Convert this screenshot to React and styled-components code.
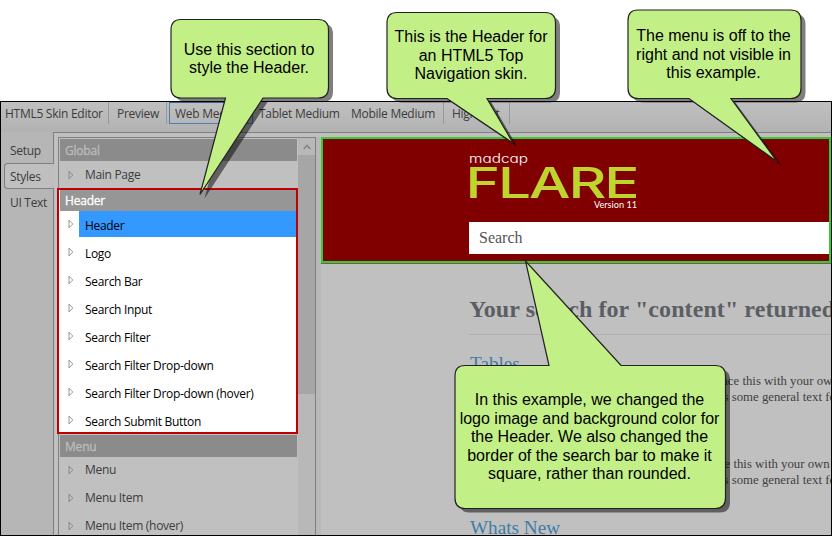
import React from "react";
import styled, { createGlobalStyle } from "styled-components";

const Global = createGlobalStyle`
  * { box-sizing: border-box; }
  html, body { margin: 0; padding: 0; background: #fff; }
  body { width: 832px; height: 536px; overflow: hidden; }
`;

const Stage = styled.div`
  position: relative;
  width: 832px;
  height: 536px;
  padding-top: 101px;
  overflow: hidden;
`;

const Window = styled.div`
  display: flex;
  flex-direction: column;
  height: 435px;
  border: 1px solid #000;
  background: #b6b6b6;
  font-family: "Open Sans", "Noto Sans", sans-serif;
  font-size: 12px;
  color: #3c3c3c;
  overflow: hidden;
`;

const Toolbar = styled.div`
  display: flex;
  flex: none;
  height: 30px;
  background: linear-gradient(#c0c0c0, #b2b2b2);
`;

const Tool = styled.div`
  width: ${(p) => p.$w}px;
  height: 22px;
  padding-left: ${(p) => p.$pad ?? 8}px;
  line-height: 24px;
  white-space: nowrap;
  letter-spacing: ${(p) => p.$ls ?? -0.27}px;
  border-right: ${(p) => (p.$sep ? "1px solid #969a9e" : "none")};
`;

const ActiveTool = styled(Tool)`
  margin-left: 2px;
  border: 1px solid #4a80b8;
  border-top-color: #3d6288;
  line-height: 22px;
`;

const Body = styled.div`
  display: flex;
  flex: 1;
  min-height: 0;
`;

const SideTabs = styled.div`
  width: 53px;
  flex: none;
  display: flex;
  flex-direction: column;
  background: #b6b6b6;
`;

const SideTab = styled.div`
  height: ${(p) => p.$h}px;
  padding: ${(p) => p.$top}px 0 0 9px;
  line-height: 16px;
  border-right: 1px solid #808080;
  letter-spacing: ${(p) => p.$ls ?? -0.3}px;
  white-space: nowrap;
`;

const ActiveSideTab = styled(SideTab)`
  margin-left: 3px;
  padding-left: 5px;
  border: 1px solid #808080;
  border-right: none;
  border-radius: 4px 0 0 4px;
  background: #bfbfbf;
`;

const Work = styled.div`
  flex: 1;
  min-width: 0;
  display: flex;
  padding: 4px 0 0 4px;
  border-top: 1px solid #808080;
  background: #c0c0c0;
`;

const StylePanel = styled.div`
  display: flex;
  width: 258px;
  flex: none;
  border: 1px solid #808080;
  border-bottom: none;
`;

const Tree = styled.div`
  width: 239px;
  flex: none;
  padding-top: 1px;
`;

const GroupTitle = styled.div`
  height: ${(p) => p.$h ?? 22}px;
  margin: 0 1px;
  padding-left: 5px;
  background: ${(p) => (p.$lit ? "#969696" : "#8b8b8b")};
  color: ${(p) => (p.$lit ? "#fff" : "#bcbcbc")};
  line-height: ${(p) => p.$lh ?? 23}px;
  -webkit-text-stroke: ${(p) => (p.$lit ? "0.3px #fff" : "0.3px #bcbcbc")};
  letter-spacing: ${(p) => p.$ls ?? -0.2}px;
`;

const Row = styled.div`
  display: flex;
  align-items: center;
  height: 28px;
  margin-top: ${(p) => p.$mt ?? 0}px;
  padding-left: 9px;
`;

const RowLabel = styled.div`
  flex: 1;
  height: 26px;
  margin-left: 5px;
  padding-left: 6px;
  line-height: 26px;
  white-space: nowrap;
  letter-spacing: -0.31px;
  background: ${(p) => (p.$on ? "#3399ff" : "transparent")};
`;

const Focused = styled.div`
  margin: -1px 0 1px -2px;
  width: 241px;
  height: 246px;
  overflow: hidden;
  border: 2px solid #c00000;
  background: #fff;
  color: #000;
  & > :first-child { margin-right: 0; }
  ${RowLabel} { line-height: 29px; }
`;

const Scrollbar = styled.div`
  flex: 1;
  display: flex;
  flex-direction: column;
  background: #b8b8b8;
`;
const ScrollUp = styled.div`
  height: 17px;
  display: flex;
  align-items: center;
  justify-content: center;
`;
const Thumb = styled.div`
  height: 239px;
  background: #a6a6a6;
`;

const Preview = styled.div`
  flex: 1;
  min-width: 0;
  border-left: 5px solid #b8b8b8;
  font-family: "Liberation Serif", serif;
  overflow: hidden;
`;

const SkinHeader = styled.div`
  height: 126px;
  padding: 11px 0 0 146px;
  border: 2px solid #32cd32;
  background: #800000;
`;
const HeaderShade = styled.div`
  height: 1px;
  background: #7a5a50;
`;

const LogoArt = styled.svg`
  display: block;
  width: 180px;
  height: 72px;
  overflow: visible;
`;

const SearchBox = styled.div`
  height: 32px;
  padding-left: 10px;
  background: #fff;
  color: #555;
  font-size: 16px;
  line-height: 32px;
`;

const Results = styled.div`
  padding-left: 148px;
  white-space: nowrap;
`;

const Headline = styled.h1`
  margin: 0;
  padding-top: 31px;
  height: 71px;
  border-bottom: 1px solid #b0b0b0;
  color: #5b5e63;
  font-size: 24px;
  line-height: 28px;
  letter-spacing: 0.08px;
`;

const ResultLink = styled.div`
  margin-top: ${(p) => p.$mt}px;
  height: 24px;
  padding-left: 1px;
  color: #3f7ca8;
  font-size: 19.2px;
  line-height: 24px;
`;

const Excerpt = styled.div`
  margin: ${(p) => p.$mt}px 0 0 ${(p) => p.$ml}px;
  color: #404040;
  font-size: 12.8px;
  line-height: 16px;
`;

const CalloutLayer = styled.div`
  position: absolute;
  inset: 0;
`;

const Bubble = styled.svg`
  position: absolute;
  inset: 0;
  width: 832px;
  height: 536px;
`;

const CalloutText = styled.div`
  position: absolute;
  left: ${(p) => p.$x}px;
  top: ${(p) => p.$y}px;
  width: ${(p) => p.$w}px;
  text-align: center;
  white-space: nowrap;
  color: #000;
  font-family: "Liberation Sans", Arial, sans-serif;
  font-size: 16px;
  line-height: 18.5px;
`;
const Line = styled.div``;

const Arrow = () => (
  <svg width="6" height="10" viewBox="0 0 6 10" fill="none" stroke="currentColor" strokeOpacity="0.4">
    <path d="M1 1.2V8.8L4.8 5Z" />
  </svg>
);

const TreeRow = ({ label, on, mt }) => (
  <Row $mt={mt}>
    <Arrow />
    <RowLabel $on={on}>{label}</RowLabel>
  </Row>
);

const headerItems = ["Header", "Logo", "Search Bar", "Search Input", "Search Filter", "Search Filter Drop-down", "Search Filter Drop-down (hover)", "Search Submit Button"];
const menuItems = ["Menu", "Menu Item", "Menu Item (hover)"];

const callouts = [
  {
    d: "M181 19.5H318Q328.500 19.5 328.500 30V87.500Q328.500 98 318 98H263L200 194.500L225.500 98H181Q171 98 171 87.500V30Q171 19.500 181 19.500Z",
    x: 171, w: 156, y: 40.500, lines: ["Use this section to", "style the Header."],
  },
  {
    d: "M397 12.500H545Q555.500 12.500 555.500 23V88Q555.500 98.500 545 98.500H487L513 143L447 98.500H397Q387 98.500 387 88V23Q387 12.500 397 12.500Z",
    x: 387, w: 168, y: 28, lines: ["This is the Header for", "an HTML5 Top", "Navigation skin."],
  },
  {
    d: "M638 10H790.500Q801 10 801 20.500V88Q801 98.500 790.500 98.500H731L777 161.500L689 98.500H638Q628 98.500 628 88V20.500Q628 10 638 10Z",
    x: 628, w: 171, y: 27, lines: ["The menu is off to the", "right and not visible in", "this example."],
  },
  {
    d: "M465 365.500H549L525.500 261L621 365.500H715Q725.500 365.500 725.500 376V498Q725.500 508.500 715 508.500H465Q455 508.500 455 498V376Q455 365.500 465 365.500Z",
    x: 455, w: 269, y: 391,
    lines: ["In this example, we changed the", "logo image and background color for", "the Header. We also changed the", "border of the search bar to make it", "square, rather than rounded."],
  },
];

const Callout = ({ d, x, y, w, lines }) => (
  <>
    <Bubble viewBox="0 0 832 536">
      <path d={d} transform="translate(4.500 4)" fill="#000" fillOpacity="0.5" />
      <path d={d} fill="#c3ef87" stroke="#222" strokeWidth="1.2" />
    </Bubble>
    <CalloutText $x={x} $y={y} $w={w}>
      {lines.map((l) => <Line key={l}>{l}</Line>)}
    </CalloutText>
  </>
);

export default function App() {
  return (
    <>
      <Global />
      <Stage>
        <Window>
          <Toolbar>
            <Tool $w={108} $pad={4} $sep>HTML5 Skin Editor</Tool>
            <Tool $w={58} $sep>Preview</Tool>
            <ActiveTool $w={84} $pad={5}>Web Medium</ActiveTool>
            <Tool $w={92} $pad={6}>Tablet Medium</Tool>
            <Tool $w={99} $pad={6} $sep>Mobile Medium</Tool>
            <Tool $w={66} $sep>Highlight</Tool>
          </Toolbar>
          <Body>
            <SideTabs>
              <SideTab $h={31} $top={11}>Setup</SideTab>
              <ActiveSideTab $h={26} $top={5}>Styles</ActiveSideTab>
              <SideTab $h={347} $top={6}>UI Text</SideTab>
            </SideTabs>
            <Work>
              <StylePanel>
                <Tree>
                  <GroupTitle $lh={24}>Global</GroupTitle>
                  <TreeRow label="Main Page" />
                  <Focused>
                    <GroupTitle $lit $h={21} $lh={22}>Header</GroupTitle>
                    {headerItems.map((t, i) => (
                      <TreeRow key={t} label={t} on={i === 0} mt={i === 0 ? -1 : 0} />
                    ))}
                  </Focused>
                  <GroupTitle $lh={24}>Menu</GroupTitle>
                  {menuItems.map((t, i) => <TreeRow key={t} label={t} mt={i === 0 ? -1 : 0} />)}
                </Tree>
                <Scrollbar>
                  <ScrollUp>
                    <svg width="8" height="6" viewBox="0 0 8 6" fill="none" stroke="#858585" strokeWidth="1.6">
                      <path d="M0.700 5L4 1.500L7.300 5" />
                    </svg>
                  </ScrollUp>
                  <Thumb />
                </Scrollbar>
              </StylePanel>
              <Preview>
                <SkinHeader>
                  <LogoArt viewBox="0 0 180 72">
                    <text x="0" y="12.500" fill="#fff" fontFamily="Inter, sans-serif" fontSize="12.500" textLength="59" lengthAdjust="spacingAndGlyphs" fontWeight="300" style={{ fontFeatureSettings: '"cv11"' }}>madcap</text>
                    <text x="-3.500" y="48" fill="#bfd52d" fontFamily="Inter, sans-serif" fontWeight="500" fontSize="42.500" letterSpacing="-1.500" textLength="172" lengthAdjust="spacingAndGlyphs">FLARE</text>
                    <text x="125" y="58" fill="#fff" fontFamily="Lato, sans-serif" fontSize="9" textLength="43" lengthAdjust="spacingAndGlyphs">Version 11</text>
                  </LogoArt>
                  <SearchBox>Search</SearchBox>
                </SkinHeader>
                <HeaderShade />
                <Results>
                  <Headline>Your search for "content" returned</Headline>
                  <ResultLink $mt={17}>Tables</ResultLink>
                  <Excerpt $mt={-3} $ml={229}>Replace this with your own</Excerpt>
                  <Excerpt $mt={0} $ml={225}>This is some general text for</Excerpt>
                  <Excerpt $mt={51} $ml={220}>Replace this with your own</Excerpt>
                  <Excerpt $mt={0} $ml={225}>This is some general text for</Excerpt>
                  <ResultLink $mt={28}>Whats New</ResultLink>
                </Results>
              </Preview>
            </Work>
          </Body>
        </Window>
        <CalloutLayer>
          {callouts.map((c) => <Callout key={c.x} {...c} />)}
        </CalloutLayer>
      </Stage>
    </>
  );
}
